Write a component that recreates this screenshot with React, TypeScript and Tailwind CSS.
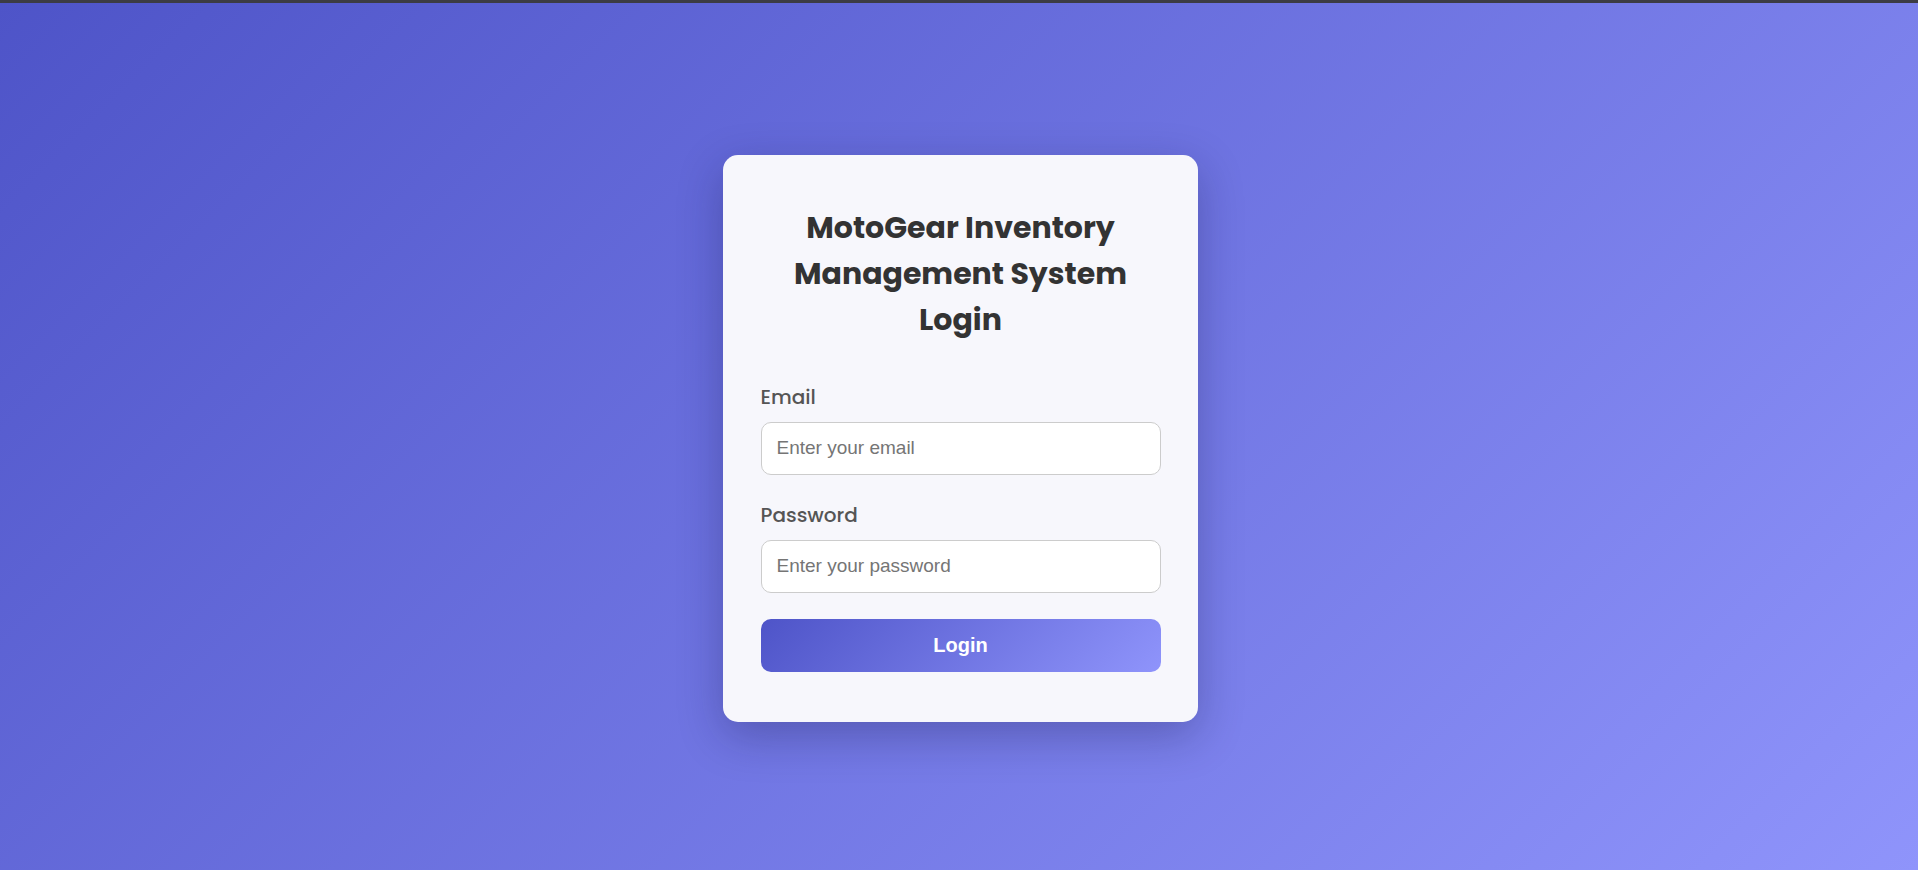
import { useState } from "react";

export default function App() {
  const [email, setEmail] = useState("");
  const [password, setPassword] = useState("");

  return (
    <div className="flex h-[870px] w-full flex-col overflow-hidden">
      {/* thin dark strip along the top edge */}
      <div className="h-[3px] w-full bg-[#3c3c44]" />

      <div className="flex flex-1 items-center justify-center bg-[linear-gradient(135deg,#4e54c8,#8f94fb)]">
        <div className="mt-[3px] ml-[3px] w-[475px] rounded-[15px] bg-[#f7f7fc] px-[37.5px] pt-[50px] pb-[50px] font-['Poppins',Inter,sans-serif] shadow-[0_14px_45px_rgba(20,20,70,0.3)]">
          <h1 className="mb-[39px] text-center text-[30px] font-bold leading-[46px] text-[#333333]">
            MotoGear Inventory Management System Login
          </h1>

          <form onSubmit={(e) => e.preventDefault()} className="flex flex-col">
            <label className="mb-[10px] text-[20px] font-medium leading-[30px] text-[#555555]">Email</label>
            <input
              type="email"
              value={email}
              onChange={(e) => setEmail(e.target.value)}
              placeholder="Enter your email"
              className="mb-[25px] h-[53px] w-full rounded-[10px] border border-[#cccccc] bg-white px-[15px] font-['Liberation_Sans',Arial,sans-serif] text-[19px] text-[#333] outline-none placeholder:text-[#757575]"
            />

            <label className="mb-[10px] text-[20px] font-medium leading-[30px] text-[#555555]">Password</label>
            <input
              type="password"
              value={password}
              onChange={(e) => setPassword(e.target.value)}
              placeholder="Enter your password"
              className="mb-[26px] h-[53px] w-full rounded-[10px] border border-[#cccccc] bg-white px-[15px] font-['Liberation_Sans',Arial,sans-serif] text-[19px] text-[#333] outline-none placeholder:text-[#757575]"
            />

            <button
              type="submit"
              className="h-[53px] w-full rounded-[10px] bg-[linear-gradient(135deg,#4e54c8,#8f94fb)] font-['Liberation_Sans',Arial,sans-serif] text-[20px] font-bold text-white"
            >
              Login
            </button>
          </form>
        </div>
      </div>
    </div>
  );
}
